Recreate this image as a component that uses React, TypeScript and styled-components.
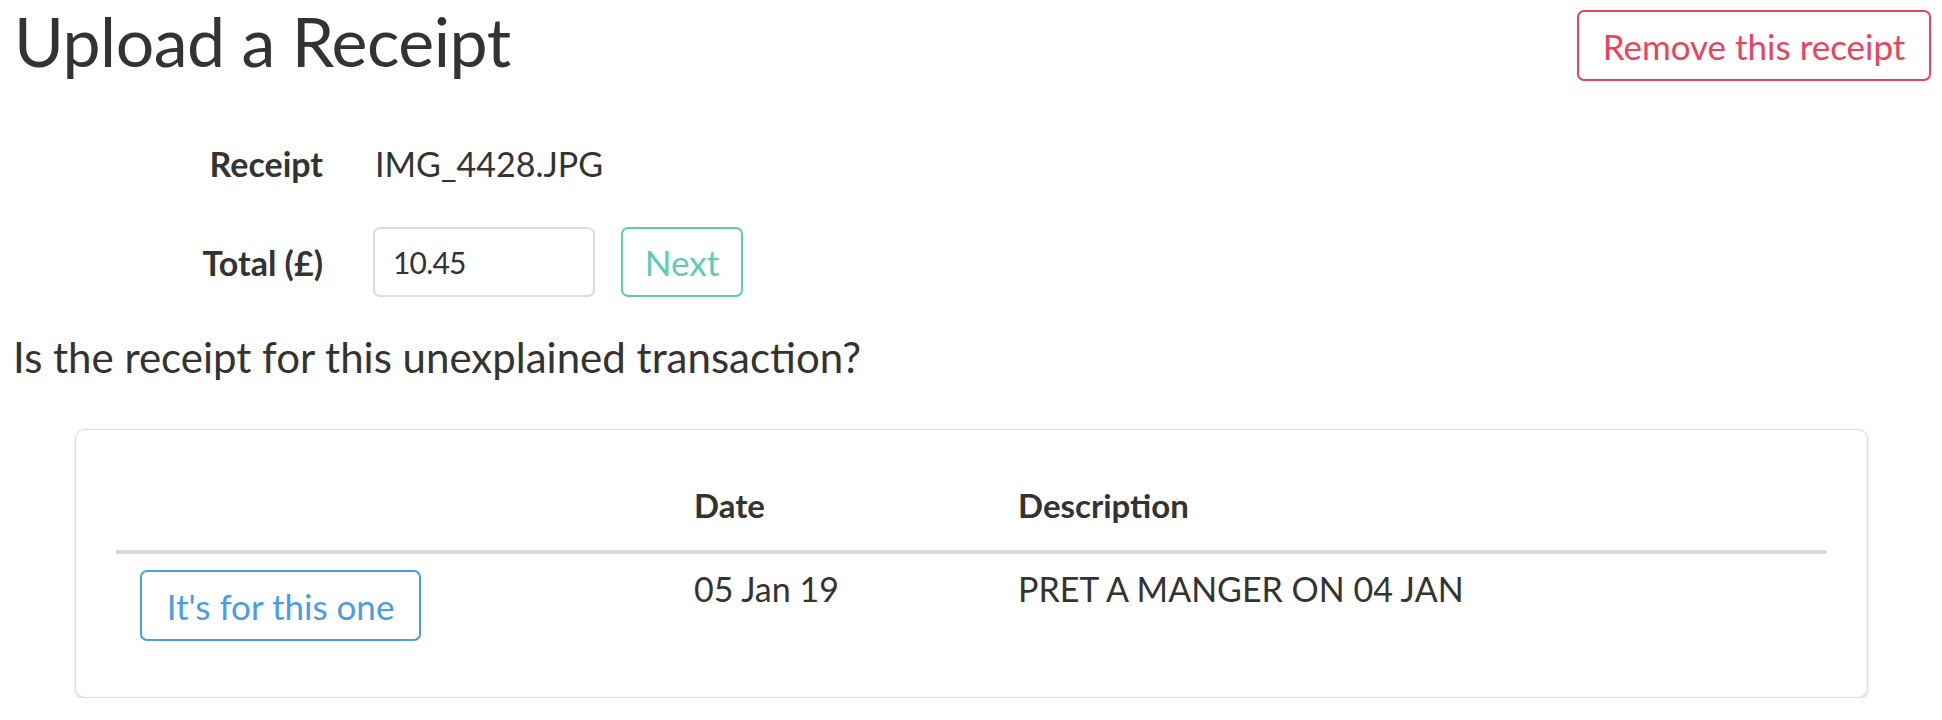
import React, { useState } from 'react';
import styled, { createGlobalStyle } from 'styled-components';

const GlobalStyle = createGlobalStyle`
  body {
    margin: 0;
    background: #fff;
    color: #333;
    font-family: Lato, "Noto Sans", sans-serif;
  }
`;

const Page = styled.div`
  padding: 0 11px 0 13px;
`;

const Header = styled.div`
  display: flex;
  justify-content: space-between;
  align-items: flex-start;
`;

const Title = styled.h1`
  margin: 7px 0 0 1px;
  font-size: 68px;
  font-weight: 400;
  line-height: 68px;
  letter-spacing: -0.5px;
  color: #333;
`;

const OutlineButton = styled.button<{ $tone: string }>`
  font-family: inherit;
  font-size: 35px;
  background: #fff;
  color: ${p => p.$tone};
  border: 2px solid ${p => p.$tone};
  border-radius: 7px;
  height: 71px;
  padding: 0 22px;
  cursor: pointer;
`;

const RemoveButton = styled(OutlineButton)`
  margin-top: 10px;
  width: 354px;
`;

const NextButton = styled(OutlineButton)`
  width: 122px;
  height: 70px;
  padding: 0;
`;

const Form = styled.div`
  display: grid;
  grid-template-columns: 310px auto;
  grid-auto-rows: 70px;
  column-gap: 50px;
  row-gap: 29px;
  align-items: center;
  margin-top: 47px;
`;

const Label = styled.label`
  text-align: right;
  font-weight: 700;
  font-size: 34px;
`;

const Value = styled.div`
  font-size: 34px;
  padding-left: 2px;
`;

const InlineRow = styled.div`
  display: flex;
  gap: 26px;
  align-items: center;
`;

const Input = styled.input`
  width: 222px;
  height: 70px;
  box-sizing: border-box;
  border: 2px solid #dcdcdc;
  border-radius: 7px;
  padding: 0 18px;
  font-family: inherit;
  font-size: 30px;
  letter-spacing: -0.8px;
  color: #333;
  outline: none;
`;

const Question = styled.p`
  margin: 35px 0 0;
  font-size: 42px;
  font-weight: 400;
  line-height: 1.2;
`;

const Card = styled.div`
  margin: 47px 63px 0 62px;
  padding: 40px;
  border: 1px solid #dcdcdc;
  border-radius: 10px;
  box-shadow: 0 2px 3px rgba(0, 0, 0, 0.15);
`;

const Table = styled.table`
  width: 100%;
  border-collapse: collapse;
  table-layout: fixed;
`;

const Th = styled.th<{ $w?: number }>`
  box-sizing: border-box;
  width: ${p => (p.$w ? `${p.$w}px` : 'auto')};
  text-align: left;
  font-size: 33px;
  font-weight: 700;
  line-height: 40px;
  padding: 15px 24px 25px;
  border-bottom: 4px solid #dadada;
`;

const Td = styled.td`
  vertical-align: top;
  font-size: 34px;
  line-height: 38px;
  padding: 16px 24px;
`;

const MatchButton = styled(OutlineButton)`
  width: 281px;
  padding: 0;
`;

export default function App() {
  const [total, setTotal] = useState('10.45');

  return (
    <Page>
      <GlobalStyle />
      <Header>
        <Title>Upload a Receipt</Title>
        <RemoveButton $tone="#e9445d">Remove this receipt</RemoveButton>
      </Header>
      <Form>
        <Label>Receipt</Label>
        <Value>IMG_4428.JPG</Value>
        <Label>Total (£)</Label>
        <InlineRow>
          <Input value={total} onChange={e => setTotal(e.target.value)} />
          <NextButton $tone="#5ccdaf">Next</NextButton>
        </InlineRow>
      </Form>
      <Question>Is the receipt for this unexplained transaction?</Question>
      <Card>
        <Table>
          <thead>
            <tr>
              <Th $w={554} />
              <Th $w={324}>Date</Th>
              <Th>Description</Th>
            </tr>
          </thead>
          <tbody>
            <tr>
              <Td>
                <MatchButton $tone="#4a9be8">It's for this one</MatchButton>
              </Td>
              <Td>05 Jan 19</Td>
              <Td>PRET A MANGER ON 04 JAN</Td>
            </tr>
          </tbody>
        </Table>
      </Card>
    </Page>
  );
}
